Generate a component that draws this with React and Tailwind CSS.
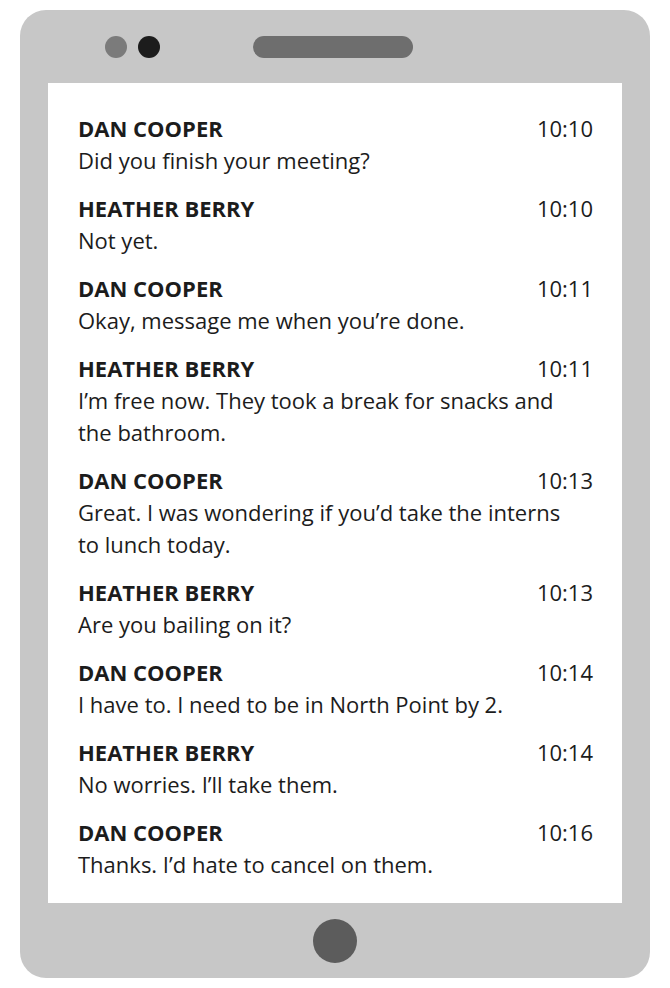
const messages = [
  { name: 'DAN COOPER', time: '10:10', text: 'Did you finish your meeting?' },
  { name: 'HEATHER BERRY', time: '10:10', text: 'Not yet.' },
  { name: 'DAN COOPER', time: '10:11', text: 'Okay, message me when you’re done.' },
  { name: 'HEATHER BERRY', time: '10:11', text: 'I’m free now. They took a break for snacks and the bathroom.' },
  { name: 'DAN COOPER', time: '10:13', text: 'Great. I was wondering if you’d take the interns to lunch today.' },
  { name: 'HEATHER BERRY', time: '10:13', text: 'Are you bailing on it?' },
  { name: 'DAN COOPER', time: '10:14', text: 'I have to. I need to be in North Point by 2.' },
  { name: 'HEATHER BERRY', time: '10:14', text: 'No worries. I’ll take them.' },
  { name: 'DAN COOPER', time: '10:16', text: 'Thanks. I’d hate to cancel on them.' },
]

export default function App() {
  return (
    <div className="min-h-[988px] w-[670px] bg-white pt-[10px] pl-[20px]">
      {/* phone body */}
      <div className="w-[630px] rounded-[26px] bg-[#c7c7c7] px-[28px]">
        {/* top bezel */}
        <div className="flex h-[73px] items-center pl-[57px]">
          <div className="h-[22px] w-[22px] rounded-full bg-[#7b7b7b]" />
          <div className="ml-[11px] h-[22px] w-[22px] rounded-full bg-[#1c1c1c]" />
          <div className="ml-[93px] h-[22px] w-[160px] rounded-full bg-[#6e6e6e]" />
        </div>

        {/* screen */}
        <div
          className="flex flex-col gap-[16px] bg-white pt-[29px] pr-[29px] pb-[23px] pl-[30px] text-[22px] leading-[32px] text-[#1c1c1c]"
          style={{ fontFamily: '"Open Sans", "Noto Sans", sans-serif' }}
        >
          {messages.map((m, i) => (
            <div key={i}>
              <div className="flex justify-between">
                <span className="font-bold">{m.name}</span>
                <span>{m.time}</span>
              </div>
              <p className="max-w-[500px]">{m.text}</p>
            </div>
          ))}
        </div>

        {/* bottom bezel */}
        <div className="flex h-[75px] items-center justify-center">
          <div className="h-[44px] w-[44px] rounded-full bg-[#5c5c5c]" />
        </div>
      </div>
    </div>
  )
}
